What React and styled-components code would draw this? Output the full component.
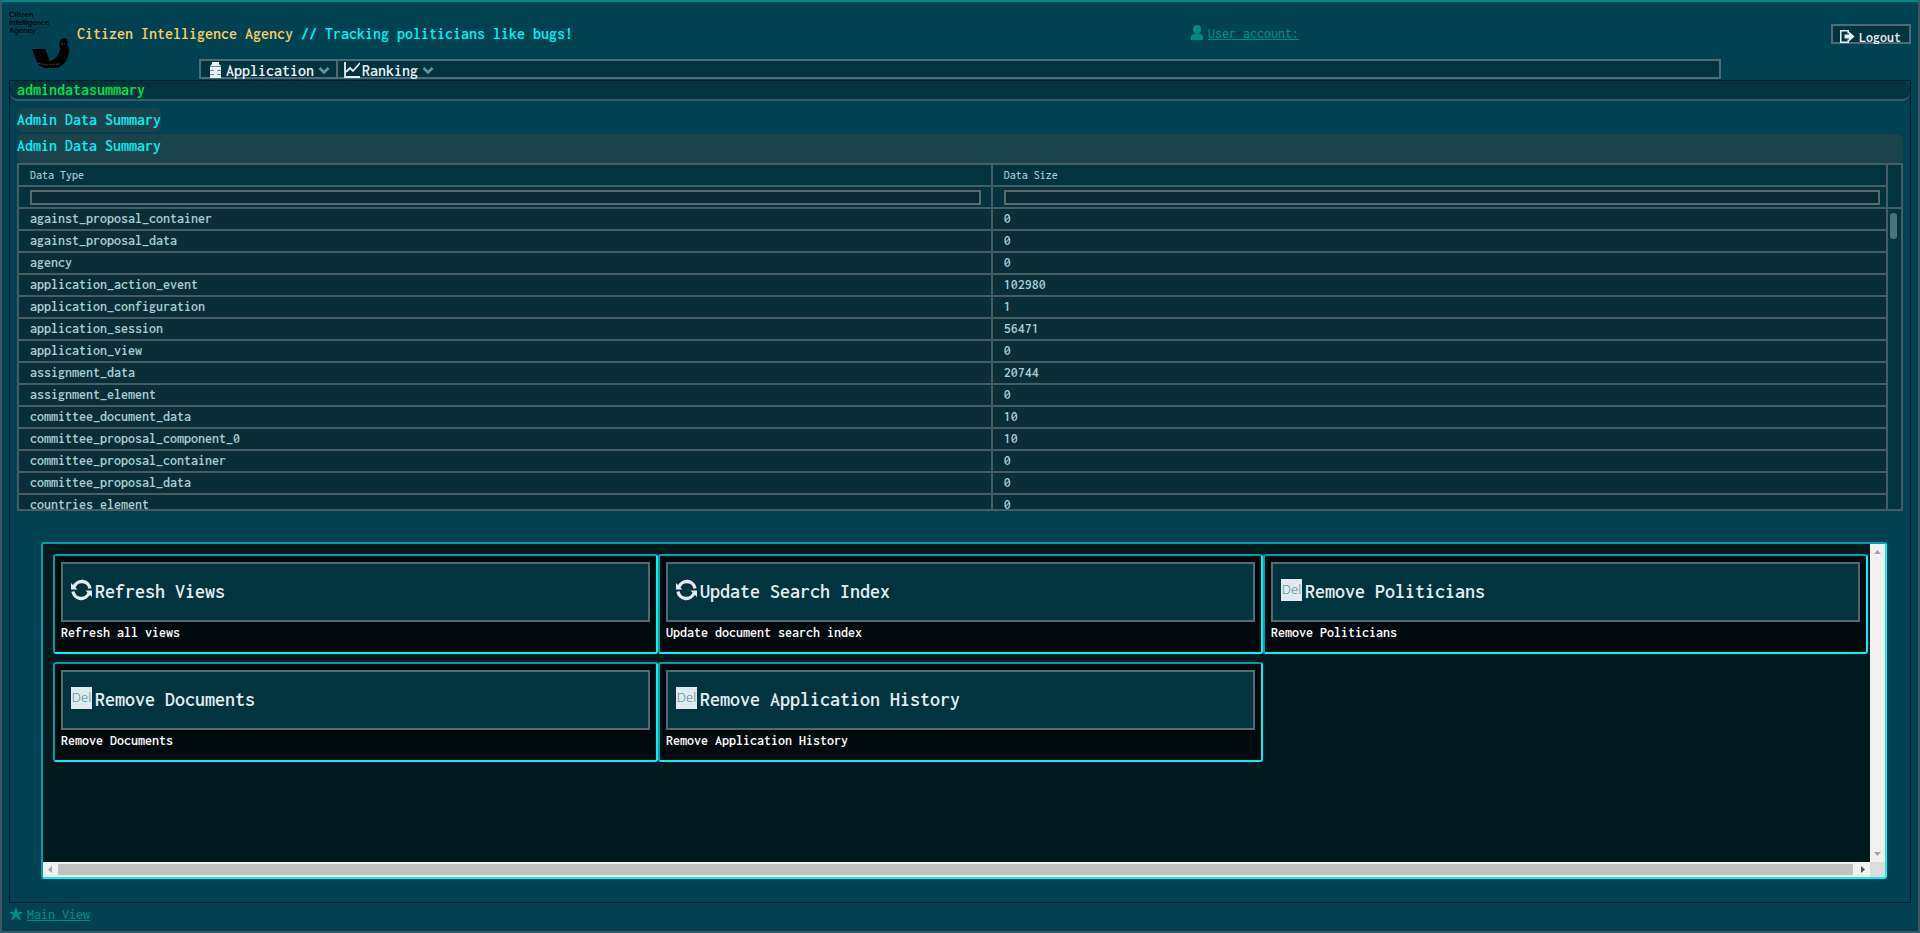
import React from 'react';
import styled, { createGlobalStyle } from 'styled-components';

const Global = createGlobalStyle`
  *, *::before, *::after { box-sizing: border-box; }
  body {
    margin: 0;
    background: #004251;
    color: #a9cdd6;
    font-family: Inconsolata, "Noto Sans Mono CJK JP", "Liberation Mono", monospace;
    font-size: 14px;
    font-weight: 600;
    line-height: 20px;
  }
  button, input { font: inherit; color: inherit; margin: 0; }
`;

const teal = '#008b82';
const edge = '#465d66';
const deep = '#02343f';

const Page = styled.div`
  min-height: 100vh;
  display: flex;
  flex-direction: column;
  border: 2px solid #3b5964;
  border-top-color: ${teal};
  padding: 6px 7px;
`;

const Header = styled.header`
  display: grid;
  grid-template-columns: 64px 1fr 1fr;
  column-gap: 4px;
  height: 51px;
`;

const Logo = styled.svg`
  width: 62px;
  height: 64px;
`;

const Title = styled.h1`
  margin: 0;
  padding-top: 16px;
  font-size: 16px;
  font-weight: 600;
  color: #f8cd63;
  white-space: nowrap;
  span { color: #00f0f5; }
`;

const Account = styled.div`
  display: flex;
  justify-content: space-between;
  align-items: flex-start;
  padding: 16px 0 0 194px;
`;

const TextLink = styled.a`
  display: inline-flex;
  align-items: center;
  gap: 4px;
  color: ${teal};
  font-weight: 500;
  text-decoration: none;
  span { text-decoration: underline; }
  svg { margin-bottom: 3px; }
`;

const LogoutButton = styled.button`
  display: flex;
  align-items: center;
  gap: 4px;
  width: 80px;
  height: 20px;
  padding: 8px 7px 0;
  border: 2px solid #536a74;
  background: ${deep};
  color: #e4f1f5;
  line-height: 16px;
  svg { margin-bottom: 4px; }
`;

const Menu = styled.nav`
  display: flex;
  height: 20px;
  margin: 0 190px 1px;
  border: 2px solid #536a74;
  background: ${deep};
`;

const MenuButton = styled.button`
  display: flex;
  align-items: center;
  gap: 2px;
  padding: 4px 6px 0 ${p => p.$left}px;
  border: 0;
  border-right: ${p => (p.$divider ? '2px solid #536a74' : '0')};
  background: none;
  color: #e4f1f5;
  font-size: 16px;
  line-height: 16px;
  svg:first-child { margin-bottom: 3px; }
  svg:last-child { margin-left: 2px; }
`;

const Main = styled.main`
  flex: 1;
  display: flex;
  flex-direction: column;
  border: 1px solid #001a20;
`;

const Caption = styled.div`
  height: 20px;
  padding: 0 7px;
  border-bottom: 2px solid #3d5a66;
  border-radius: 8px;
  background: ${deep};
  color: #00e648;
  font-size: 16px;
  line-height: 18px;
`;

const Content = styled.div`
  display: flex;
  flex-direction: column;
  align-items: flex-start;
  gap: 2px;
  padding: 7px 7px 0;
`;

const PageName = styled.h2`
  margin: 0;
  border-radius: 6px;
  background: #1b434c;
  color: #00f0f5;
  font-size: 16px;
  font-weight: 600;
  line-height: 24px;
`;

const DataPanel = styled.section`
  align-self: stretch;
`;

const PanelTitle = styled.h3`
  height: 29px;
  margin: 0;
  border-radius: 6px;
  background: #1b434c;
  color: #00f0f5;
  font-size: 16px;
  font-weight: 600;
  line-height: 24px;
`;

const GridFrame = styled.div`
  display: flex;
  height: 348px;
  border: 2px solid ${edge};
  overflow: hidden;
`;

const DataTable = styled.table`
  flex: 1;
  table-layout: fixed;
  border-collapse: separate;
  border-spacing: 0;
  th, td {
    height: 22px;
    padding: 0 10px 0 11px;
    border-right: 2px solid ${edge};
    border-bottom: 2px solid ${edge};
    background: ${deep};
    text-align: left;
    font-weight: 600;
    line-height: 20px;
  }
  th { font-size: 12px; font-weight: 500; }
  td { background: #0a2e37; }
  th:first-child { width: 52.1%; }
  th:last-child { padding-right: 6px; }
`;

const Filter = styled.input`
  display: block;
  width: 100%;
  height: 15px;
  padding: 0 4px;
  border: 2px solid #5a696c;
  border-radius: 0;
  background: #092a32;
`;

const ScrollGutter = styled.div`
  width: 13px;
  background: ${deep};
`;

const GutterHead = styled.div`
  height: 44px;
  border-bottom: 2px solid ${edge};
`;

const GutterThumb = styled.div`
  width: 7px;
  height: 26px;
  margin: 4px 2px;
  border-radius: 3px;
  background: #4e717b;
`;

const Actions = styled.section`
  display: grid;
  grid-template: 318px 15px / 1fr 15px;
  margin: 31px 23px 23px 31px;
  border: 2px solid;
  border-color: #009fa6 #00f3fb #00f3fb #009fa6;
  border-radius: 3px;
  background: #001a1f;
`;

const Cards = styled.div`
  display: grid;
  grid-template-columns: repeat(3, 1fr);
  align-content: start;
  row-gap: 8px;
  padding: 10px 2px 0 10px;
`;

const Card = styled.article`
  height: 100px;
  padding: 6px;
  border: 2px solid;
  border-color: #009fa6 #00f3fb #00f3fb #009fa6;
  border-radius: 3px;
  background: #00090c;
  p {
    margin: 0;
    color: #fff;
    line-height: 22px;
  }
`;

const ActionButton = styled.button`
  display: flex;
  align-items: center;
  gap: 3px;
  width: 100%;
  height: 60px;
  padding: 0 8px;
  border: 2px solid #536a74;
  background: ${deep};
  color: #e0edf1;
  font-size: 20px;
  line-height: 24px;
  svg, i { margin-bottom: 4px; }
`;

const DelBadge = styled.i`
  width: 21px;
  height: 22px;
  overflow: hidden;
  background: #dfebf0;
  color: #4f7884;
  font: 300 13px/20px "Open Sans", sans-serif;
  text-align: center;
`;

const Bar = styled.div`
  display: flex;
  flex-direction: ${p => (p.$vertical ? 'column' : 'row')};
  align-items: center;
  justify-content: space-between;
  padding: ${p => (p.$vertical ? '4px 0' : '0 4px')};
  background: #f1f1f1;
`;

const BarThumb = styled.div`
  flex: 1;
  height: 11px;
  margin: 0 6px 0 4px;
  background: #c1c1c1;
`;

const Corner = styled.div`
  background: #dcdcdc;
`;

const Footer = styled.footer`
  height: 22px;
  padding-top: 2px;
`;

const rows = [
  ['against_proposal_container', '0'],
  ['against_proposal_data', '0'],
  ['agency', '0'],
  ['application_action_event', '102980'],
  ['application_configuration', '1'],
  ['application_session', '56471'],
  ['application_view', '0'],
  ['assignment_data', '20744'],
  ['assignment_element', '0'],
  ['committee_document_data', '10'],
  ['committee_proposal_component_0', '10'],
  ['committee_proposal_container', '0'],
  ['committee_proposal_data', '0'],
  ['countries_element', '0'],
];

const cards = [
  ['refresh', 'Refresh Views', 'Refresh all views'],
  ['refresh', 'Update Search Index', 'Update document search index'],
  ['del', 'Remove Politicians', 'Remove Politicians'],
  ['del', 'Remove Documents', 'Remove Documents'],
  ['del', 'Remove Application History', 'Remove Application History'],
];

const Refresh = () => (
  <svg width="21" height="22" viewBox="0 0 21 22" fill="none" stroke="currentColor" strokeWidth="3.4">
    <path d="M3 8A8.300 8.300 0 0 1 19 9.500M18 14A8.300 8.300 0 0 1 2 12.500" />
    <path d="M0 4v6.500h6.500zM21 18v-6.500h-6.500z" fill="currentColor" stroke="none" />
  </svg>
);

const Chevron = () => (
  <svg width="12" height="8" viewBox="0 0 12 8" fill="none" stroke="#6f909b" strokeWidth="2.600">
    <path d="M1.500 1L6 5.500 10.500 1" />
  </svg>
);

const Arrow = ({ d, color }) => (
  <svg width="7" height="7" viewBox="0 0 7 7" fill={color}><path d={d} /></svg>
);

export default function App() {
  return (
    <Page>
      <Global />
      <Header>
        <Logo viewBox="0 0 62 64" fill="#000">
          <g fontFamily="Liberation Sans, sans-serif" fontSize="8" fontWeight="400" stroke="#000" strokeWidth="0.2">
            <text x="0" y="9">Citizen</text>
            <text x="0" y="17">Intelligence</text>
            <text x="0" y="25">Agency</text>
          </g>
          <path d="M23 41h13.500l4 12c5-1 9-5 10-10l1-2c-1-2-1.500-4-1-7 1-3 3-4 5-4 3 1 4 4 3 7 2 3 2 6 1 10-2 7-6 11-11 13H36c-4-1-7-3-8-6z" />
          <path d="M29 55l8 2 14-1M52 36h4" stroke="#4c6870" strokeWidth="0.7" strokeDasharray="2 1" fill="none" />
        </Logo>
        <Title>Citizen Intelligence Agency <span>// Tracking politicians like bugs!</span></Title>
        <Account>
          <TextLink href="#account">
            <svg width="14" height="15" viewBox="0 0 14 15" fill="currentColor">
              <path d="M7 0c3 0 4 2 4 4 0 2-1 4-2 4.500 3 1 4 2 4 4V15H1v-2.500c0-2 1-3 4-4C4 8 3 6 3 4c0-2 1-4 4-4z" />
            </svg>
            <span>User account:</span>
          </TextLink>
          <LogoutButton>
            <svg width="15" height="13" viewBox="0 0 15 13" fill="currentColor">
              <path d="M0 0h9v3.500H7.500v-2h-6v10h6v-2H9V13H0z" />
              <path d="M4.500 4.500H9V1.500l5.500 5-5.500 5v-3H4.500z" />
            </svg>
            Logout
          </LogoutButton>
        </Account>
      </Header>
      <Menu>
        <MenuButton $left={9} $divider>
          <svg width="14" height="16" viewBox="0 0 14 16" fill="currentColor">
            <path d="M2 0h7v2l2 2v12H0V4l2-2z" />
            <path d="M0 4.500h11M0 8.500h4M7 8.500h4M0 12.500h4M7 12.500h4" stroke="#6f8d96" strokeWidth="1" />
          </svg>
          Application <Chevron />
        </MenuButton>
        <MenuButton $left={6}>
          <svg width="16" height="16" viewBox="0 0 16 16" fill="none" stroke="currentColor" strokeWidth="1.800">
            <path d="M1 0v15h15M2 10l4-4 3 3 7-8" />
          </svg>
          Ranking <Chevron />
        </MenuButton>
      </Menu>
      <Main>
        <Caption>admindatasummary</Caption>
        <Content>
          <PageName>Admin Data Summary</PageName>
          <DataPanel>
            <PanelTitle>Admin Data Summary</PanelTitle>
            <GridFrame>
              <DataTable>
                <thead>
                  <tr><th>Data Type</th><th>Data Size</th></tr>
                  <tr>
                    <th><Filter aria-label="Filter data type" /></th>
                    <th><Filter aria-label="Filter data size" /></th>
                  </tr>
                </thead>
                <tbody>
                  {rows.map(([type, size]) => (
                    <tr key={type}><td>{type}</td><td>{size}</td></tr>
                  ))}
                </tbody>
              </DataTable>
              <ScrollGutter><GutterHead /><GutterThumb /></ScrollGutter>
            </GridFrame>
          </DataPanel>
        </Content>
        <Actions>
          <Cards>
            {cards.map(([icon, name, text]) => (
              <Card key={name}>
                <ActionButton>
                  {icon === 'refresh' ? <Refresh /> : <DelBadge>Del</DelBadge>}
                  {name}
                </ActionButton>
                <p>{text}</p>
              </Card>
            ))}
          </Cards>
          <Bar $vertical>
            <Arrow d="M0 6l3.500-4L7 6z" color="#a3a3a3" />
            <Arrow d="M0 1l3.500 4L7 1z" color="#a3a3a3" />
          </Bar>
          <Bar>
            <Arrow d="M5 0L1 3.500 5 7z" color="#a3a3a3" />
            <BarThumb />
            <Arrow d="M2 0l4 3.500L2 7z" color="#505050" />
          </Bar>
          <Corner />
        </Actions>
      </Main>
      <Footer>
        <TextLink href="#main">
          <svg width="14" height="14" viewBox="0 0 14 14" fill="currentColor">
            <path d="M7 0l2 5h5l-4 3 2 6-5-4-5 4 2-6-4-3h5z" />
          </svg>
          <span>Main View</span>
        </TextLink>
      </Footer>
    </Page>
  );
}
